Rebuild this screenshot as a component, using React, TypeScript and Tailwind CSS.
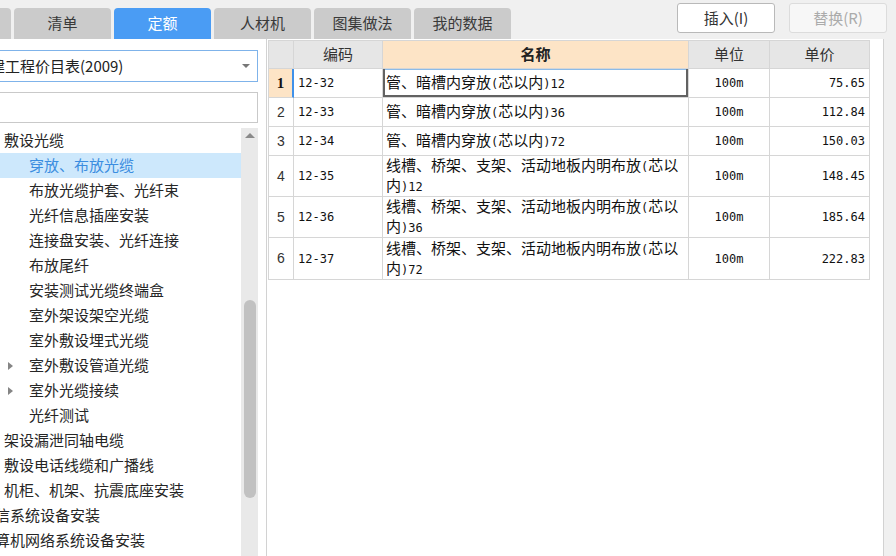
import React from "react";

const ASCII = /^[\x00-\x7f]+$/;

function Mixed({ text }: { text: string }) {
  const parts = text.split(/([\x00-\x7f]+)/).filter(Boolean);
  return (
    <>
      {parts.map((p, i) =>
        ASCII.test(p) ? (
          <span key={i} className="font-['DejaVu_Sans_Mono',monospace] text-[12px]">
            {p}
          </span>
        ) : (
          <span key={i}>{p}</span>
        )
      )}
    </>
  );
}

type TreeItem = { text: string; level: 0 | 1 | 2; arrow?: boolean; selected?: boolean };

const tree: TreeItem[] = [
  { text: "敷设光缆", level: 1 },
  { text: "穿放、布放光缆", level: 2, selected: true },
  { text: "布放光缆护套、光纤束", level: 2 },
  { text: "光纤信息插座安装", level: 2 },
  { text: "连接盘安装、光纤连接", level: 2 },
  { text: "布放尾纤", level: 2 },
  { text: "安装测试光缆终端盒", level: 2 },
  { text: "室外架设架空光缆", level: 2 },
  { text: "室外敷设埋式光缆", level: 2 },
  { text: "室外敷设管道光缆", level: 2, arrow: true },
  { text: "室外光缆接续", level: 2, arrow: true },
  { text: "光纤测试", level: 2 },
  { text: "架设漏泄同轴电缆", level: 1 },
  { text: "敷设电话线缆和广播线", level: 1 },
  { text: "机柜、机架、抗震底座安装", level: 1 },
  { text: "通信系统设备安装", level: 0 },
  { text: "计算机网络系统设备安装", level: 0 },
];

type Row = { no: string; code: string; name: string[]; unit: string; price: string; h: string };

const rows: Row[] = [
  { no: "1", code: "12-32", name: ["管、暗槽内穿放(芯以内)12"], unit: "100m", price: "75.65", h: "h-[29px]" },
  { no: "2", code: "12-33", name: ["管、暗槽内穿放(芯以内)36"], unit: "100m", price: "112.84", h: "h-[29px]" },
  { no: "3", code: "12-34", name: ["管、暗槽内穿放(芯以内)72"], unit: "100m", price: "150.03", h: "h-[29px]" },
  { no: "4", code: "12-35", name: ["线槽、桥架、支架、活动地板内明布放(芯以", "内)12"], unit: "100m", price: "148.45", h: "h-[41px]" },
  { no: "5", code: "12-36", name: ["线槽、桥架、支架、活动地板内明布放(芯以", "内)36"], unit: "100m", price: "185.64", h: "h-[41px]" },
  { no: "6", code: "12-37", name: ["线槽、桥架、支架、活动地板内明布放(芯以", "内)72"], unit: "100m", price: "222.83", h: "h-[42px]" },
];

const tabs = ["", "清单", "定额", "人材机", "图集做法", "我的数据"];

export default function App() {
  return (
    <div className="w-[896px] h-[556px] overflow-hidden bg-[#f0f0f0] flex flex-col font-['Noto_Sans_CJK_SC',sans-serif] text-[#333]">
      {/* top bar */}
      <div className="h-[39px] flex justify-between shrink-0">
        <div className="flex items-end gap-[3px] ml-[-86px]">
          {tabs.map((t, i) => (
            <div
              key={i}
              className={
                "w-[97px] h-[31px] rounded-t-[4px] flex items-center justify-center text-[15px] " +
                (t === "定额" ? "bg-[#4a9cf4] text-white" : "bg-[#cbcbcb] text-[#3a3a3a]")
              }
            >
              {t}
            </div>
          ))}
        </div>
        <div className="flex items-start gap-[14px] mt-[3px] mr-[9px]">
          <div className="w-[98px] h-[30px] rounded-[3px] border border-[#b9b9b9] bg-white flex items-center justify-center text-[15px] text-[#333]">
            插入(I)
          </div>
          <div className="w-[98px] h-[30px] rounded-[3px] border border-[#dcdcdc] bg-[#f7f7f7] flex items-center justify-center text-[15px] text-[#ababab]">
            替换(R)
          </div>
        </div>
      </div>

      {/* main */}
      <div className="flex flex-1 min-h-0">
        {/* left panel */}
        <div className="w-[266px] shrink-0 bg-white flex flex-col overflow-hidden">
          <div className="mt-[11px] ml-[-10px] w-[268px] h-[32px] border border-[#7fb3ea] flex items-center relative overflow-hidden">
            <span className="ml-[-16px] text-[15px] text-[#222] whitespace-nowrap">土建工程价目表(2009)</span>
            <div className="ml-auto mr-[7px] w-0 h-0 border-x-[4px] border-x-transparent border-t-[4px] border-t-[#777]" />
          </div>
          <div className="mt-[10px] ml-[-10px] w-[268px] h-[31px] border border-[#c9c9c9]" />
          <div className="mt-[5px] flex flex-1 min-h-0">
            <div className="w-[241px] shrink-0 overflow-hidden">
              {tree.map((it, i) => (
                <div
                  key={i}
                  className={
                    "h-[25px] flex items-center whitespace-nowrap text-[15px] " +
                    (it.selected ? "bg-[#cde8fc] text-[#3b8de0]" : "text-[#262626]")
                  }
                >
                  {it.level === 0 && <span className="ml-[-20px]">{it.text}</span>}
                  {it.level === 1 && <span className="ml-[4px]">{it.text}</span>}
                  {it.level === 2 && (
                    <>
                      <div className="ml-[8px] w-[21px] flex items-center">
                        {it.arrow && (
                          <div className="w-0 h-0 border-y-[4px] border-y-transparent border-l-[5px] border-l-[#858585]" />
                        )}
                      </div>
                      <span>{it.text}</span>
                    </>
                  )}
                </div>
              ))}
            </div>
            {/* scrollbar */}
            <div className="w-[17px] shrink-0 bg-[#e9e9e9] flex flex-col items-center">
              <div className="mt-[5px] w-0 h-0 border-x-[5px] border-x-transparent border-b-[5px] border-b-[#8a8a8a]" />
              <div className="mt-[162px] w-[12px] h-[198px] rounded-full bg-[#c1c1c1]" />
            </div>
          </div>
        </div>

        {/* table area */}
        <div className="w-[618px] shrink-0 bg-white border-x border-[#d2d2d2] pl-[1px] pt-[1px]">
          <div className="grid grid-cols-[25px_89px_306px_81px_100px] border-t border-l border-[#d6d6d6] w-max">
            {/* header */}
            <div className="h-[28px] bg-[#e6e6e6] border-r border-b border-[#d6d6d6]" />
            <div className="h-[28px] bg-[#e6e6e6] border-r border-b border-[#d6d6d6] flex items-center justify-center text-[15px] text-[#333]">编码</div>
            <div className="h-[28px] bg-[#fde4c6] border-r border-b border-[#d6d6d6] flex items-center justify-center text-[15px] font-bold text-[#222]">名称</div>
            <div className="h-[28px] bg-[#e6e6e6] border-r border-b border-[#d6d6d6] flex items-center justify-center text-[15px] text-[#333]">单位</div>
            <div className="h-[28px] bg-[#e6e6e6] border-r border-b border-[#d6d6d6] flex items-center justify-center text-[15px] text-[#333]">单价</div>

            {rows.map((r, i) => {
              const first = i === 0;
              return (
                <React.Fragment key={r.no}>
                  <div
                    className={
                      r.h +
                      " border-b border-[#d6d6d6] flex items-center justify-center " +
                      (first
                        ? "bg-[#fde4c6] border-r-2 border-r-[#3f91ea] font-['Liberation_Serif',serif] font-bold text-[15px] text-[#111]"
                        : "border-r font-['Liberation_Sans',sans-serif] text-[14px] text-[#333]")
                    }
                  >
                    {r.no}
                  </div>
                  <div className={r.h + " border-r border-b border-[#d6d6d6] flex items-center pl-[4px] font-['DejaVu_Sans_Mono',monospace] text-[12px] text-[#111]"}>
                    {r.code}
                  </div>
                  <div
                    className={
                      r.h +
                      " border-r border-b border-[#d6d6d6] flex flex-col justify-center pl-[3px] text-[15px] leading-[18px] text-[#111] " +
                      (first
                        ? "shadow-[inset_2px_0_0_#626262,inset_-2px_0_0_#626262,inset_0_-2px_0_#626262,inset_0_1px_0_#8cbbe8]"
                        : "")
                    }
                  >
                    {r.name.map((l, k) => (
                      <div key={k} className="whitespace-nowrap">
                        <Mixed text={l} />
                      </div>
                    ))}
                  </div>
                  <div className={r.h + " border-r border-b border-[#d6d6d6] flex items-center justify-center font-['DejaVu_Sans_Mono',monospace] text-[12px] text-[#111]"}>
                    {r.unit}
                  </div>
                  <div className={r.h + " border-r border-b border-[#d6d6d6] flex items-center justify-end pr-[4px] font-['DejaVu_Sans_Mono',monospace] text-[12px] text-[#111]"}>
                    {r.price}
                  </div>
                </React.Fragment>
              );
            })}
          </div>
        </div>
        <div className="flex-1 bg-[#f0f0f0]" />
      </div>
    </div>
  );
}
